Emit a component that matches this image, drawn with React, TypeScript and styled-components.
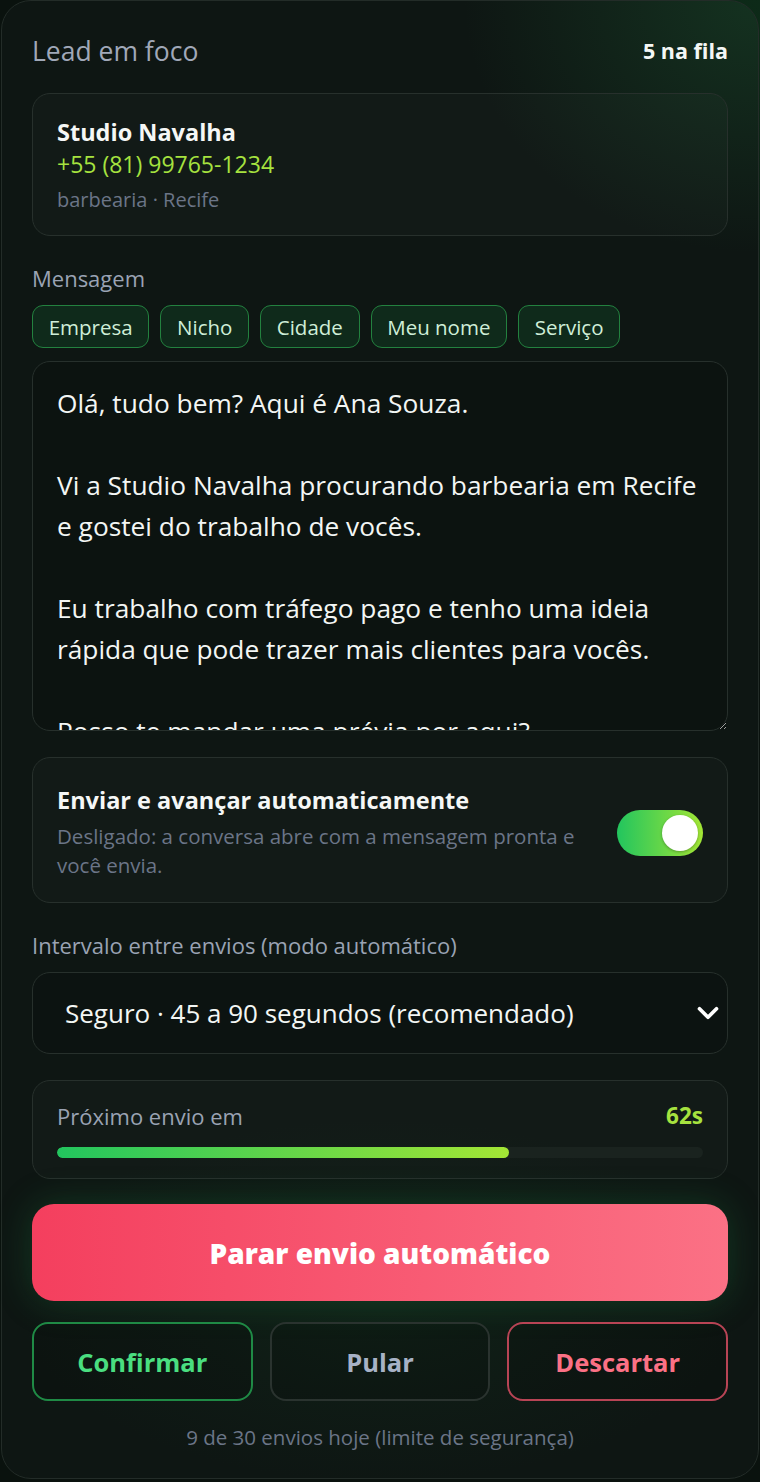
import React, { useState } from 'react';
import styled, { createGlobalStyle } from 'styled-components';
import { ChevronDown } from 'lucide-react';

const GlobalStyle = createGlobalStyle`
  html, body {
    margin: 0;
    padding: 0;
    background: #0a120e;
  }
  body {
    font-family: 'Open Sans', 'Noto Sans', sans-serif;
    -webkit-font-smoothing: antialiased;
  }
  * { box-sizing: border-box; }
`;

const chips = ['Empresa', 'Nicho', 'Cidade', 'Meu nome', 'Serviço'];

const message = `Olá, tudo bem? Aqui é Ana Souza.

Vi a Studio Navalha procurando barbearia em Recife e gostei do trabalho de vocês.

Eu trabalho com tráfego pago e tenho uma ideia rápida que pode trazer mais clientes para vocês.

Posso te mandar uma prévia por aqui?`;

const App = () => {
  const [auto, setAuto] = useState(true);
  const progress = 70;

  return (
    <>
      <GlobalStyle />
      <Page>
        <Card>
          <Header>
            <Title>Lead em foco</Title>
            <QueueCount>5 na fila</QueueCount>
          </Header>

          <LeadCard>
            <LeadName>Studio Navalha</LeadName>
            <LeadPhone>+55 (81) 99765-1234</LeadPhone>
            <LeadMeta>barbearia · Recife</LeadMeta>
          </LeadCard>

          <Label $top={29}>Mensagem</Label>
          <ChipRow>
            {chips.map((c) => (
              <Chip key={c}>{c}</Chip>
            ))}
          </ChipRow>
          <MessageBox defaultValue={message} spellCheck={false} />

          <ToggleCard>
            <ToggleText>
              <ToggleTitle>Enviar e avançar automaticamente</ToggleTitle>
              <ToggleDesc>
                Desligado: a conversa abre com a mensagem pronta e você envia.
              </ToggleDesc>
            </ToggleText>
            <Switch $on={auto} onClick={() => setAuto(!auto)}>
              <Knob />
            </Switch>
          </ToggleCard>

          <Label $top={29}>Intervalo entre envios (modo automático)</Label>
          <Select>
            <span>Seguro · 45 a 90 segundos (recomendado)</span>
            <ChevronDown size={34} strokeWidth={2.6} color="#ffffff" />
          </Select>

          <ProgressCard>
            <ProgressRow>
              <ProgressLabel>Próximo envio em</ProgressLabel>
              <Countdown>62s</Countdown>
            </ProgressRow>
            <Track>
              <Fill style={{ width: `${progress}%` }} />
            </Track>
          </ProgressCard>

          <StopButton>Parar envio automático</StopButton>

          <ActionRow>
            <ActionButton $variant="confirm">Confirmar</ActionButton>
            <ActionButton $variant="skip">Pular</ActionButton>
            <ActionButton $variant="discard">Descartar</ActionButton>
          </ActionRow>

          <Footer>9 de 30 envios hoje (limite de segurança)</Footer>
        </Card>
      </Page>
    </>
  );
};

export default App;

const Page = styled.div`
  width: 760px;
  min-height: 1482px;
  padding: 0 1px;
  background: radial-gradient(circle at 100% 0%, #0d2a18 0%, #0a120e 40%);
`;

const Card = styled.div`
  display: flex;
  flex-direction: column;
  width: 758px;
  min-height: 1479px;
  padding: 33px 30px 27px;
  border: 1px solid #232c28;
  border-radius: 30px;
  background:
    radial-gradient(ellipse 420px 360px at 100% 0%, rgba(28, 84, 48, 0.45), transparent 70%),
    radial-gradient(ellipse 520px 260px at 50% 88%, rgba(22, 70, 38, 0.22), transparent 70%),
    #0e1613;
`;

const Header = styled.div`
  display: flex;
  justify-content: space-between;
  align-items: center;
  height: 34px;
`;

const Title = styled.div`
  font-size: 26.5px;
  line-height: 34px;
  color: #a0a8b8;
  font-weight: 500;
`;

const QueueCount = styled.div`
  font-size: 21.5px;
  line-height: 34px;
  font-weight: 700;
  color: #f4f7f5;
`;

const Panel = styled.div`
  border: 1px solid #27302c;
  border-radius: 18px;
  background: rgba(255, 255, 255, 0.018);
`;

const LeadCard = styled(Panel)`
  margin-top: 25px;
  padding: 24px 24px 22px;
  display: flex;
  flex-direction: column;
`;

const LeadName = styled.div`
  font-size: 23.5px;
  line-height: 28px;
  font-weight: 700;
  color: #f5f7f6;
`;

const LeadPhone = styled.div`
  margin-top: 4px;
  font-size: 23px;
  line-height: 28px;
  color: #a6e23f;
`;

const LeadMeta = styled.div`
  margin-top: 9px;
  font-size: 20px;
  line-height: 26px;
  color: #6b7587;
`;

const Label = styled.div<{ $top: number }>`
  margin-top: ${(p) => p.$top}px;
  font-size: 22px;
  line-height: 26px;
  color: #9aa3b3;
`;

const ChipRow = styled.div`
  display: flex;
  gap: 11px;
  margin-top: 14px;
`;

const Chip = styled.button`
  height: 43px;
  padding: 0 15.7px;
  border: 1.5px solid #23813f;
  border-radius: 11px;
  background: #0f2a1b;
  color: #cfeed8;
  font-family: inherit;
  font-size: 20.5px;
  cursor: pointer;
`;

const MessageBox = styled.textarea`
  display: block;
  margin-top: 13px;
  width: 100%;
  height: 370px;
  padding: 21px 24px;
  border: 1px solid #27302c;
  border-radius: 18px;
  background: rgba(0, 0, 0, 0.12);
  color: #f3f6f4;
  font-family: inherit;
  font-size: 26.3px;
  line-height: 41px;
  resize: vertical;
  outline: none;
  scrollbar-width: none;
  &::-webkit-scrollbar { display: none; }
`;

const ToggleCard = styled(Panel)`
  margin-top: 26px;
  padding: 28px 24px 22px;
  display: flex;
  align-items: center;
  gap: 26px;
`;

const ToggleText = styled.div`
  flex: 1;
  display: flex;
  flex-direction: column;
`;

const ToggleTitle = styled.div`
  font-size: 23.5px;
  line-height: 28px;
  font-weight: 700;
  color: #f5f7f6;
  white-space: nowrap;
`;

const ToggleDesc = styled.div`
  margin-top: 8px;
  font-size: 20.5px;
  line-height: 29px;
  color: #6b7587;
`;

const Switch = styled.div<{ $on: boolean }>`
  flex: none;
  width: 86px;
  height: 46px;
  border-radius: 23px;
  padding: 5px;
  display: flex;
  justify-content: ${(p) => (p.$on ? 'flex-end' : 'flex-start')};
  background: ${(p) =>
    p.$on ? 'linear-gradient(90deg, #22c55e, #a3e635)' : '#2a332f'};
  cursor: pointer;
`;

const Knob = styled.div`
  width: 36px;
  height: 36px;
  border-radius: 50%;
  background: #ffffff;
  box-shadow: 0 1px 3px rgba(0, 0, 0, 0.3);
`;

const Select = styled(Panel)`
  margin-top: 14px;
  height: 82px;
  padding: 0 2px 0 32px;
  display: flex;
  align-items: center;
  justify-content: space-between;
  font-size: 26px;
  color: #f3f6f4;
  background: rgba(0, 0, 0, 0.1);
  cursor: pointer;
`;

const ProgressCard = styled(Panel)`
  margin-top: 26px;
  padding: 22px 24px 20px;
`;

const ProgressRow = styled.div`
  display: flex;
  justify-content: space-between;
  align-items: center;
  line-height: 26px;
`;

const ProgressLabel = styled.span`
  font-size: 22px;
  color: #9aa3b3;
`;

const Countdown = styled.span`
  font-size: 22.5px;
  font-weight: 700;
  color: #a6e23f;
`;

const Track = styled.div`
  margin-top: 18px;
  height: 11px;
  border-radius: 6px;
  background: #1a231f;
  overflow: hidden;
`;

const Fill = styled.div`
  height: 100%;
  border-radius: 6px;
  background: linear-gradient(90deg, #22c55e, #a3e635);
`;

const StopButton = styled.button`
  margin-top: 25px;
  height: 97px;
  border: none;
  border-radius: 22px;
  background: linear-gradient(90deg, #f43f5e, #fb7185);
  color: #ffffff;
  font-family: 'Open Sans', sans-serif;
  font-size: 28px;
  font-weight: 800;
  box-shadow: 0 0 36px rgba(34, 160, 80, 0.25);
  cursor: pointer;
`;

const ActionRow = styled.div`
  margin-top: 21px;
  display: grid;
  grid-template-columns: 1fr 1fr 1fr;
  gap: 17px;
`;

const variants = {
  confirm: { border: '#1f8a45', color: '#4ade80' },
  skip: { border: '#2a332f', color: '#a7b2c6' },
  discard: { border: '#b84455', color: '#fb7185' },
};

const ActionButton = styled.button<{ $variant: keyof typeof variants }>`
  height: 79px;
  border: 2px solid ${(p) => variants[p.$variant].border};
  border-radius: 16px;
  background: rgba(0, 0, 0, 0.12);
  color: ${(p) => variants[p.$variant].color};
  font-family: inherit;
  font-size: 25.5px;
  font-weight: 700;
  cursor: pointer;
`;

const Footer = styled.div`
  margin-top: 23px;
  text-align: center;
  font-size: 20.5px;
  line-height: 26px;
  color: #6b7587;
`;
